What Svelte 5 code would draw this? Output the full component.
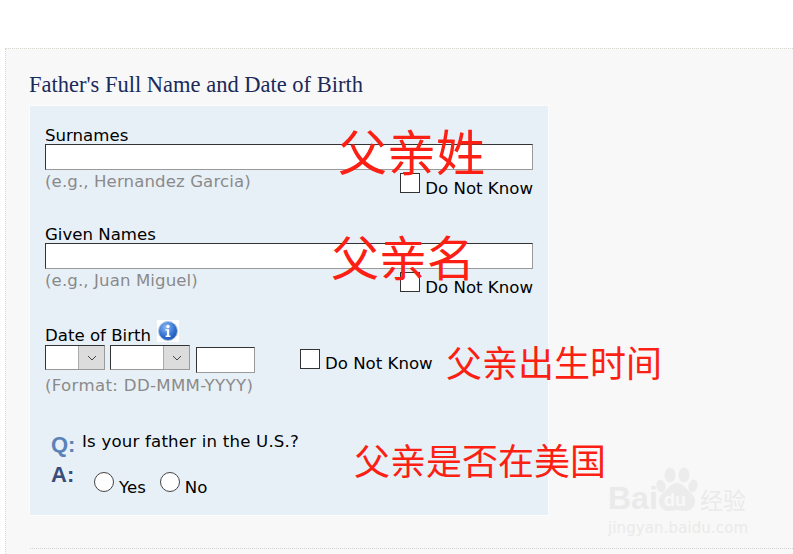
<script>
	const fields = [
		{ label: 'Surnames', hint: '(e.g., Hernandez Garcia)' },
		{ label: 'Given Names', hint: '(e.g., Juan Miguel)' }
	];
</script>

<div class="page">
	<div class="panel">
		<h2>Father's Full Name and Date of Birth</h2>
		<div class="box">
			{#each fields as f}
				<div class="field">
					<div class="label">{f.label}</div>
					<input class="text wide" type="text" />
					<div class="under">
						<span class="hint">{f.hint}</span>
						<label class="dnk"><input class="check" type="checkbox" /><span>Do Not Know</span></label>
					</div>
				</div>
			{/each}

			<div class="dob">
				<div class="label">
					Date of Birth
					<svg class="info" viewBox="0 0 22 22" width="22" height="22">
						<defs>
							<radialGradient id="ib" cx="0.4" cy="0.3" r="0.8">
								<stop offset="0" stop-color="#8fb8f0" />
								<stop offset="0.6" stop-color="#2f6fd0" />
								<stop offset="1" stop-color="#1c4aa0" />
							</radialGradient>
						</defs>
						<rect width="22" height="22" fill="#fff" />
						<circle cx="11" cy="11" r="9.5" fill="url(#ib)" stroke="#a9c4e8" />
						<circle cx="11" cy="6.5" r="1.7" fill="#fff" />
						<path d="M8.5 9.2h3.7v6.2h1.3v1.5H8.6v-1.5h1.3v-4.7H8.5z" fill="#fff" />
					</svg>
				</div>
				<div class="dob-row">
					<div class="select day"><span class="arrow"><svg viewBox="0 0 10 6" width="10" height="6"><path d="M1 1l4 4 4-4" fill="none" stroke="#444" /></svg></span></div>
					<div class="select month"><span class="arrow"><svg viewBox="0 0 10 6" width="10" height="6"><path d="M1 1l4 4 4-4" fill="none" stroke="#444" /></svg></span></div>
					<input class="text year" type="text" />
					<label class="dnk inline"><input class="check" type="checkbox" /><span>Do Not Know</span></label>
				</div>
				<span class="hint">(Format: DD-MMM-YYYY)</span>
			</div>

			<div class="qa">
				<div class="q"><b class="mark qm">Q:</b><span>Is your father in the U.S.?</span></div>
				<div class="a">
					<b class="mark am">A:</b>
					<label class="radio"><input type="radio" name="us" /><span>Yes</span></label>
					<label class="radio"><input type="radio" name="us" /><span>No</span></label>
				</div>
			</div>
		</div>
		<div class="footer-line"></div>
	</div>

	<span class="note n1">父亲姓</span>
	<span class="note n2">父亲名</span>
	<span class="note n3">父亲出生时间</span>
	<span class="note n4">父亲是否在美国</span>

	<div class="watermark">
		<div class="wm-top">
			<span class="wm-bai">Bai</span>
			<div class="wm-paw">
				<svg class="paw" viewBox="0 0 44 46" width="44" height="46">
					<ellipse cx="6" cy="19" rx="4.5" ry="6.5" transform="rotate(-15 6 19)" />
					<ellipse cx="15" cy="8" rx="5.5" ry="7.5" />
					<ellipse cx="29" cy="8" rx="5.5" ry="7.5" />
					<ellipse cx="38" cy="19" rx="4.5" ry="6.5" transform="rotate(15 38 19)" />
					<path d="M22 16c-6 0-9 6-15 11-6 5-3 17 7 17 3 0 6-1 8-1s5 1 8 1c10 0 13-12 7-17-6-5-9-11-15-11z" />
				</svg>
				<span class="wm-du">du</span>
			</div>
			<span class="wm-cn">经验</span>
		</div>
		<div class="wm-url">jingyan.baidu.com</div>
	</div>
</div>

<style>
	:global(body) {
		margin: 0;
		background: #fff;
	}

	.page {
		position: relative;
		width: 793px;
		height: 554px;
		overflow: hidden;
		font-family: 'DejaVu Sans', Verdana, sans-serif;
		font-size: 16.6px;
		color: #000;
	}

	.panel {
		position: absolute;
		left: 5px;
		top: 48px;
		width: 788px;
		height: 506px;
		box-sizing: border-box;
		background: #f8f8f8;
		border-top: 1px dotted #d8d8d0;
		border-left: 1px dotted #d8d8d0;
		padding: 22px 0 0 24px;
	}

	h2 {
		margin: 0 0 7px -1px;
		font: normal 22.5px/28px 'Liberation Serif', 'Times New Roman', serif;
		color: #1a2a5a;
	}

	.box {
		width: 518px;
		height: 409px;
		box-sizing: border-box;
		background: #e8f0f7;
		outline: 1px solid #fbfcfd;
		padding: 20px 15px 0;
	}

	.field {
		height: 99px;
	}

	.label {
		line-height: 20px;
		height: 18px;
	}

	.text {
		display: block;
		box-sizing: border-box;
		margin: 0;
		padding: 0;
		background: #fff;
		border: 1px solid;
		border-color: #333 #999 #999 #333;
		border-radius: 0;
	}

	.wide {
		width: 488px;
		height: 26px;
	}

	.under {
		position: relative;
		display: flex;
		justify-content: space-between;
		align-items: flex-start;
		padding-top: 3px;
	}

	.hint {
		color: #8a8a8a;
		line-height: 18px;
		letter-spacing: 0.1px;
	}

	.dob .hint {
		letter-spacing: 0.33px;
	}

	.dnk {
		display: flex;
		align-items: flex-end;
		gap: 5px;
		line-height: 18px;
	}

	.dnk span {
		margin-bottom: -5px;
	}

	.dnk.inline span {
		margin-bottom: -4px;
	}

	.check {
		appearance: none;
		display: block;
		width: 20px;
		height: 20px;
		margin: 0;
		background: #fff;
		border: 1px solid #333;
		border-radius: 0;
	}

	.dob {
		padding-top: 2px;
	}

	.dob .label {
		position: relative;
		height: 19px;
		line-height: 20px;
	}

	.info {
		position: absolute;
		left: 112px;
		top: -6px;
	}

	.dob-row {
		display: flex;
		align-items: flex-start;
		gap: 5px;
		height: 31px;
	}

	.select {
		box-sizing: border-box;
		height: 25px;
		background: #fff;
		border: 1px solid;
		border-color: #333 #999 #999 #333;
		display: flex;
		justify-content: flex-end;
	}

	.day {
		width: 60px;
	}

	.month {
		width: 80px;
	}

	.arrow {
		width: 25px;
		background: #dcdcdc;
		border-left: 1px solid #aaa;
		display: flex;
		align-items: center;
		justify-content: center;
	}

	.year {
		width: 59px;
		height: 26px;
		margin: 2px 0 0 1px;
	}

	.dnk.inline {
		margin: 4px 0 0 40px;
	}

	.qa {
		margin-top: 36px;
		position: relative;
	}

	.q,
	.a {
		display: flex;
		align-items: flex-start;
	}

	.mark {
		font-family: 'Liberation Sans', Arial, sans-serif;
		font-size: 22px;
		line-height: 24px;
		width: 31px;
		margin-left: 6px;
		flex: none;
	}

	.qm {
		color: #5b82b8;
		margin-top: 2px;
	}

	.am {
		color: #3a4d78;
		margin-top: 3px;
	}

	.q span {
		line-height: 20px;
		margin-top: 1px;
		letter-spacing: 0.2px;
	}

	.a {
		margin-top: 3px;
	}

	.radio {
		display: flex;
		align-items: flex-end;
		gap: 5px;
		margin: 12px 0 0 12px;
		line-height: 16px;
	}

	.radio + .radio {
		margin-left: 14px;
	}

	.radio span {
		margin-bottom: -2px;
	}

	.radio input {
		appearance: none;
		display: block;
		width: 20px;
		height: 20px;
		margin: 0 0 2px;
		background: #fff;
		border: 1px solid #444;
		border-radius: 50%;
	}

	.footer-line {
		margin-top: 33px;
		border-top: 1px dotted #d4d4d4;
	}

	.note {
		position: absolute;
		font-family: 'Noto Sans CJK SC', sans-serif;
		color: #fb1f14;
		line-height: 1;
		white-space: nowrap;
	}

	.n1 {
		left: 338px;
		top: 125px;
		font-size: 49px;
	}

	.n2 {
		left: 331px;
		top: 231px;
		font-size: 48px;
	}

	.n3 {
		left: 446px;
		top: 343px;
		font-size: 36px;
	}

	.n4 {
		left: 354px;
		top: 441px;
		font-size: 36px;
	}

	.watermark {
		position: absolute;
		left: 608px;
		top: 467px;
		width: 172px;
		color: #eaeaea;
	}

	.wm-top {
		display: flex;
		align-items: flex-end;
		height: 46px;
	}

	.wm-bai {
		font: bold 32px/30px 'Liberation Sans', Arial, sans-serif;
		width: 47px;
		flex: none;
	}

	.wm-paw {
		position: relative;
		width: 44px;
		height: 46px;
		flex: none;
	}

	.paw {
		fill: #ececec;
		display: block;
	}

	.wm-du {
		position: absolute;
		left: 9px;
		bottom: 3px;
		font: bold 18px/20px 'Liberation Sans', Arial, sans-serif;
		color: #f8f8f8;
	}

	.wm-cn {
		font: 23px/28px 'Noto Sans CJK SC', sans-serif;
		margin-left: 1px;
		white-space: nowrap;
	}

	.wm-url {
		font: 15px/18px 'DejaVu Sans', sans-serif;
		margin-top: 6px;
		letter-spacing: 0.1px;
	}
</style>
